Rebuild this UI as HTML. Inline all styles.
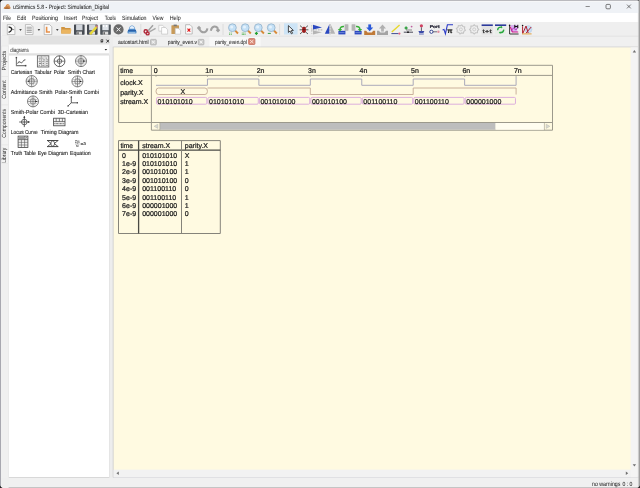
<!DOCTYPE html>
<html><head><meta charset="utf-8">
<style>
*{margin:0;padding:0}
html,body{width:640px;height:488px;overflow:hidden;background:#f0f0f0}
svg{display:block;font-family:"Liberation Sans",sans-serif;text-rendering:geometricPrecision;will-change:transform}
</style></head><body>
<svg width="640" height="488" viewBox="0 0 640 488">
<rect x="0" y="0" width="640" height="488" fill="#f0f0f0"/>
<rect x="0" y="0" width="640" height="13" fill="#eff2f6"/>
<rect x="0" y="13" width="640" height="9" fill="#ffffff"/>
<rect x="0" y="22" width="640" height="14" fill="#efefef"/>
<rect x="0" y="35.8" width="640" height="0.8" fill="#d9d9d9"/>
<path d="M3.6 8.8 Q3.8 7 5.4 6.6 Q6 4 7.8 3.9 Q9.6 4 9.9 6.6 Q10.8 7.2 10.4 8.8 Z" fill="#d0884a"/>
<path d="M4.2 8.8 Q5.6 7.4 7.4 7.6 Q9 7.8 10.2 8.8 Z" fill="#9a5a2a"/>
<path d="M7.2 5.6 Q8.6 5.2 9.4 6.2" fill="none" stroke="#f4c08a" stroke-width="0.7"/>
<rect x="1" y="1" width="638" height="0.7" fill="#fafafa"/>
<rect x="1" y="1" width="0.7" height="486" fill="#fafafa"/>
<text x="13" y="9" font-size="6.1" fill="#262626" stroke="#262626" stroke-width="0.05" textLength="96" lengthAdjust="spacingAndGlyphs">uSimmics 5.8 - Project: Simulation_Digital</text>
<line x1="585.6" y1="6.5" x2="589.8" y2="6.5" stroke="#444" stroke-width="0.6"/>
<rect x="606" y="4.4" width="4.4" height="4.4" fill="none" stroke="#444" stroke-width="0.7" rx="1"/>
<line x1="627" y1="4.6" x2="630.8" y2="8.4" stroke="#444" stroke-width="0.7"/>
<line x1="630.8" y1="4.6" x2="627" y2="8.4" stroke="#444" stroke-width="0.7"/>
<text x="3" y="19.8" font-size="6.2" fill="#262626" stroke="#262626" stroke-width="0.04" textLength="8.2" lengthAdjust="spacingAndGlyphs">File</text>
<text x="17" y="19.8" font-size="6.2" fill="#262626" stroke="#262626" stroke-width="0.04" textLength="9" lengthAdjust="spacingAndGlyphs">Edit</text>
<text x="32" y="19.8" font-size="6.2" fill="#262626" stroke="#262626" stroke-width="0.04" textLength="26" lengthAdjust="spacingAndGlyphs">Positioning</text>
<text x="64" y="19.8" font-size="6.2" fill="#262626" stroke="#262626" stroke-width="0.04" textLength="13" lengthAdjust="spacingAndGlyphs">Insert</text>
<text x="82" y="19.8" font-size="6.2" fill="#262626" stroke="#262626" stroke-width="0.04" textLength="16" lengthAdjust="spacingAndGlyphs">Project</text>
<text x="104.8" y="19.8" font-size="6.2" fill="#262626" stroke="#262626" stroke-width="0.04" textLength="11" lengthAdjust="spacingAndGlyphs">Tools</text>
<text x="122" y="19.8" font-size="6.2" fill="#262626" stroke="#262626" stroke-width="0.04" textLength="24.5" lengthAdjust="spacingAndGlyphs">Simulation</text>
<text x="152.5" y="19.8" font-size="6.2" fill="#262626" stroke="#262626" stroke-width="0.04" textLength="11" lengthAdjust="spacingAndGlyphs">View</text>
<text x="169.7" y="19.8" font-size="6.2" fill="#262626" stroke="#262626" stroke-width="0.04" textLength="11" lengthAdjust="spacingAndGlyphs">Help</text>
<rect x="0" y="477.5" width="640" height="10.5" fill="#f0f0f0"/>
<line x1="0" y1="477.3" x2="640" y2="477.3" stroke="#d2d2d8" stroke-width="0.9"/>
<rect x="0" y="487" width="640" height="1" fill="#c4c4c4"/>
<text x="592" y="485.8" font-size="6.2" fill="#262626" stroke="#262626" stroke-width="0.03" textLength="28.4" lengthAdjust="spacingAndGlyphs">no warnings</text>
<text x="622.4" y="485.8" font-size="6.2" fill="#262626" stroke="#262626" stroke-width="0.03" textLength="10" lengthAdjust="spacingAndGlyphs">0 : 0</text>
<path d="M7.3 24.6 L12.7 24.6 L14.899999999999999 26.8 L14.899999999999999 34.6 L7.3 34.6 Z" fill="#fbfbfb" stroke="#9a9a9a" stroke-width="0.6"/>
<path d="M8.6 26.8 Q12.4 27.6 11.6 29.6 Q11 31.6 8.6 32.4" fill="none" stroke="#222" stroke-width="1.3"/>
<line x1="11.6" y1="29.6" x2="14.2" y2="29.6" stroke="#444" stroke-width="0.6"/>
<path d="M19.2 29.2 L21.8 29.2 L20.5 30.7 Z" fill="#111"/>
<path d="M25.4 24.6 L30.8 24.6 L33.0 26.8 L33.0 34.6 L25.4 34.6 Z" fill="#fbfbfb" stroke="#9a9a9a" stroke-width="0.6"/>
<line x1="26.6" y1="27.2" x2="31.8" y2="27.2" stroke="#777" stroke-width="0.7"/>
<line x1="26.6" y1="28.9" x2="31.8" y2="28.9" stroke="#777" stroke-width="0.7"/>
<line x1="26.6" y1="30.6" x2="31.8" y2="30.6" stroke="#777" stroke-width="0.7"/>
<line x1="26.6" y1="32.3" x2="31.8" y2="32.3" stroke="#777" stroke-width="0.7"/>
<path d="M37.6 29.2 L40.2 29.2 L38.9 30.7 Z" fill="#111"/>
<path d="M44.2 24.6 L49.6 24.6 L51.800000000000004 26.8 L51.800000000000004 34.6 L44.2 34.6 Z" fill="#fbfbfb" stroke="#9a9a9a" stroke-width="0.6"/>
<path d="M46.6 26.8 L46.6 32 L50 32" fill="none" stroke="#e6904a" stroke-width="1.6"/>
<path d="M56 29.2 L58.6 29.2 L57.3 30.7 Z" fill="#111"/>
<path d="M61.2 27 L64.4 27 L65.4 28 L70.6 28 L70.6 33.4 L61.2 33.4 Z" fill="#d09440"/>
<path d="M61.8 29.6 L71.4 29.6 L70.6 33.4 L61.2 33.4 Z" fill="#ebb560"/>
<rect x="74" y="24.4" width="10.6" height="10.3" fill="#464b52" rx="0.6"/>
<rect x="76.1" y="24.4" width="6.4" height="5.8" fill="#d2d6dc"/>
<rect x="76.6" y="31.6" width="5.4" height="3.1" fill="#dcdcdc"/>
<rect x="77.3" y="32.2" width="1.4" height="2.2" fill="#555"/>
<rect x="87" y="24.4" width="10.6" height="10.3" fill="#464b52" rx="0.6"/>
<rect x="89.1" y="24.4" width="6.4" height="5.8" fill="#d2d6dc"/>
<rect x="89.6" y="31.6" width="5.4" height="3.1" fill="#dcdcdc"/>
<rect x="90.3" y="32.2" width="1.4" height="2.2" fill="#555"/>
<path d="M89.2 33.6 L95.6 26.2 L97.4 27.8 L91 35 Z" fill="#e8d838"/>
<path d="M95.6 26.2 L96.6 25 L98 26.4 L97.4 27.8 Z" fill="#d88080"/>
<rect x="100.2" y="24.4" width="10.6" height="10.3" fill="#4e545a" rx="0.6"/>
<rect x="102.3" y="24.4" width="6.4" height="5.8" fill="#dfe3e8"/>
<rect x="102.8" y="31.6" width="5.4" height="3.1" fill="#dcdcdc"/>
<rect x="103.5" y="32.2" width="1.4" height="2.2" fill="#555"/>
<rect x="103" y="25" width="1.2" height="2" fill="#fff"/>
<rect x="106" y="25" width="1.2" height="2" fill="#fff"/>
<circle cx="118.5" cy="29.4" r="5.1" fill="#6a6a6a"/>
<line x1="116.5" y1="27.4" x2="120.5" y2="31.4" stroke="#f4f4f4" stroke-width="1.0"/>
<line x1="120.5" y1="27.4" x2="116.5" y2="31.4" stroke="#f4f4f4" stroke-width="1.0"/>
<path d="M130 26.2 Q132 24.6 134 26.2 L136.4 31.4 Q137 33.6 135.4 33.6 L128.6 33.6 Q127 33.6 127.6 31.4 Z" fill="#4a88c8"/>
<path d="M130.4 26.6 Q132 25.4 133.6 26.6 L134.6 28.8 L129.4 28.8 Z" fill="#e8f2fc"/>
<path d="M128.2 30 L135.8 30 L136.2 31.2 L127.8 31.2 Z" fill="#2a60a8"/>
<rect x="128.6" y="32.4" width="6.8" height="0.9" fill="#c8dcf0"/>
<line x1="140.8" y1="24" x2="140.8" y2="35" stroke="#d8d8d8" stroke-width="0.8"/>
<line x1="148.2" y1="30.8" x2="153" y2="25.2" stroke="#a0a0a0" stroke-width="1.4"/>
<line x1="149.4" y1="31.8" x2="155.6" y2="28.4" stroke="#a8a8a8" stroke-width="1.4"/>
<circle cx="145.8" cy="31.4" r="1.7" fill="none" stroke="#b02838" stroke-width="1.4"/>
<circle cx="147.6" cy="33.4" r="1.5" fill="none" stroke="#b02838" stroke-width="1.4"/>
<path d="M158.8 25.3 L162.60000000000002 25.3 L164.8 27.5 L164.8 31.1 L158.8 31.1 Z" fill="#fdfdfd" stroke="#bbbbbb" stroke-width="0.6"/>
<path d="M161.6 27.5 L165.4 27.5 L167.6 29.7 L167.6 34.1 L161.6 34.1 Z" fill="#fdfdfd" stroke="#bbbbbb" stroke-width="0.6"/>
<rect x="171.4" y="25.2" width="7.6" height="8.8" fill="#c89a58" rx="0.6"/>
<rect x="173.6" y="24.6" width="3.2" height="1.6" fill="#777"/>
<path d="M175.2 28.2 L178.4 28.2 L180.6 30.4 L180.6 34.2 L175.2 34.2 Z" fill="#fdfdfd" stroke="#bbbbbb" stroke-width="0.6"/>
<path d="M185.6 24.7 L190.0 24.7 L192.2 26.9 L192.2 34.0 L185.6 34.0 Z" fill="#fbfbfb" stroke="#9a9a9a" stroke-width="0.6"/>
<line x1="187.5" y1="28.6" x2="190.3" y2="31.6" stroke="#e01818" stroke-width="1.1"/>
<line x1="190.3" y1="28.6" x2="187.5" y2="31.6" stroke="#e01818" stroke-width="1.1"/>
<path d="M199.4 29.2 Q201.6 33 204.6 32.2 Q207 31.4 207.4 28.4" fill="none" stroke="#a0a0a0" stroke-width="2.0"/>
<path d="M196.8 28 L199 25.8 L201.2 28 L199 30.2 Z" fill="#a0a0a0"/>
<path d="M210.8 30.8 Q211.6 27.2 214.4 26.6 Q216.6 26.4 218 28.6" fill="none" stroke="#a0a0a0" stroke-width="2.0"/>
<path d="M215.8 30.2 L218 28 L220.2 30.2 L218 32.4 Z" fill="#a0a0a0"/>
<line x1="223" y1="24" x2="223" y2="35" stroke="#d8d8d8" stroke-width="0.8"/>
<line x1="235.0" y1="30.3" x2="238.0" y2="33.5" stroke="#d88a38" stroke-width="1.9"/>
<circle cx="232.4" cy="27.7" r="3.9" fill="#c4e0f6" stroke="#8aaac4" stroke-width="0.7"/>
<circle cx="231.70000000000002" cy="26.9" r="1.5" fill="#e6f2fc"/>
<rect x="229.20000000000002" y="32.6" width="0.9" height="0.9" fill="#4ab04a"/>
<rect x="229.20000000000002" y="34" width="0.9" height="0.9" fill="#4ab04a"/>
<rect x="230.8" y="32.6" width="0.9" height="0.9" fill="#4ab04a"/>
<rect x="230.8" y="34" width="0.9" height="0.9" fill="#4ab04a"/>
<line x1="247.79999999999998" y1="30.3" x2="250.79999999999998" y2="33.5" stroke="#d88a38" stroke-width="1.9"/>
<circle cx="245.2" cy="27.7" r="3.9" fill="#c4e0f6" stroke="#8aaac4" stroke-width="0.7"/>
<circle cx="244.5" cy="26.9" r="1.5" fill="#e6f2fc"/>
<rect x="241.79999999999998" y="32.6" width="0.9" height="0.9" fill="#4ab04a"/>
<rect x="241.79999999999998" y="34" width="0.9" height="0.9" fill="#4ab04a"/>
<rect x="243.2" y="32.6" width="0.9" height="0.9" fill="#4ab04a"/>
<rect x="243.2" y="34" width="0.9" height="0.9" fill="#4ab04a"/>
<rect x="244.6" y="32.6" width="0.9" height="0.9" fill="#4ab04a"/>
<rect x="244.6" y="34" width="0.9" height="0.9" fill="#4ab04a"/>
<line x1="260.90000000000003" y1="30.3" x2="263.90000000000003" y2="33.5" stroke="#d88a38" stroke-width="1.9"/>
<circle cx="258.3" cy="27.7" r="3.9" fill="#c4e0f6" stroke="#8aaac4" stroke-width="0.7"/>
<circle cx="257.6" cy="26.9" r="1.5" fill="#e6f2fc"/>
<line x1="254.9" y1="33.4" x2="257.90000000000003" y2="33.4" stroke="#20a030" stroke-width="1.3"/>
<line x1="256.40000000000003" y1="31.9" x2="256.40000000000003" y2="34.9" stroke="#20a030" stroke-width="1.3"/>
<line x1="273.8" y1="30.3" x2="276.8" y2="33.5" stroke="#d88a38" stroke-width="1.9"/>
<circle cx="271.2" cy="27.7" r="3.9" fill="#c4e0f6" stroke="#8aaac4" stroke-width="0.7"/>
<circle cx="270.5" cy="26.9" r="1.5" fill="#e6f2fc"/>
<line x1="267.8" y1="33.4" x2="270.8" y2="33.4" stroke="#30a040" stroke-width="1.0"/>
<line x1="279.6" y1="24" x2="279.6" y2="35" stroke="#d8d8d8" stroke-width="0.8"/>
<rect x="284" y="23.3" width="13.6" height="11.2" fill="#cde4f6"/>
<path d="M288.4 25.6 L288.4 32.4 L290 31 L291.4 33.8 L292.6 33.2 L291.2 30.6 L293.4 30.4 Z" fill="#f4f6f8" stroke="#222" stroke-width="0.8"/>
<line x1="300" y1="25.6" x2="302.8" y2="28" stroke="#222" stroke-width="0.7"/>
<line x1="308" y1="25.6" x2="305.2" y2="28" stroke="#222" stroke-width="0.7"/>
<line x1="299.6" y1="29.8" x2="302.2" y2="29.8" stroke="#222" stroke-width="0.7"/>
<line x1="308.4" y1="29.8" x2="305.8" y2="29.8" stroke="#222" stroke-width="0.7"/>
<line x1="300" y1="34" x2="302.8" y2="31.6" stroke="#222" stroke-width="0.7"/>
<line x1="308" y1="34" x2="305.2" y2="31.6" stroke="#222" stroke-width="0.7"/>
<path d="M302.2 27.6 Q304 25.8 305.8 27.6 L306 31.8 Q304 34 302 31.8 Z" fill="#c02828"/>
<line x1="304" y1="26.8" x2="304" y2="33" stroke="#2a1010" stroke-width="0.6"/>
<line x1="302.2" y1="29.6" x2="305.8" y2="29.6" stroke="#2a1010" stroke-width="0.5"/>
<path d="M313 24.8 L322 27.4 L313 29.4 Z" fill="#2a48c0"/>
<path d="M313 30.4 L322 32.2 L313 34.6 Z" fill="#b4b4b4"/>
<line x1="311.6" y1="29.9" x2="323" y2="29.9" stroke="#555" stroke-width="0.6" stroke-dasharray="0.7 0.9"/>
<line x1="311.8" y1="25" x2="311.8" y2="34.6" stroke="#777" stroke-width="0.5" stroke-dasharray="0.7 0.9"/>
<path d="M329.3 24.6 L324.8 33.8 L329.3 33.8 Z" fill="#2a48c0"/>
<path d="M330.7 24.6 L335.2 33.8 L330.7 33.8 Z" fill="#b4b4b4"/>
<line x1="330" y1="24" x2="330" y2="35" stroke="#555" stroke-width="0.6" stroke-dasharray="0.7 0.9"/>
<rect x="344.6" y="24.2" width="3.8" height="6.6" fill="#b4b4b4" rx="0.5"/>
<rect x="338.4" y="30.8" width="7" height="3.6" fill="#2a48c0"/>
<line x1="339.2" y1="32.6" x2="344.6" y2="32.6" stroke="#aac0f0" stroke-width="0.5"/>
<path d="M344 26.6 Q340.2 26.2 340 29.6" fill="none" stroke="#38b038" stroke-width="1.5"/>
<path d="M337.8 29 L342.2 29 L340 31.4 Z" fill="#38b038"/>
<rect x="351.6" y="24.2" width="3.8" height="6.6" fill="#b4b4b4" rx="0.5"/>
<rect x="354.6" y="30.8" width="7" height="3.6" fill="#2a48c0"/>
<line x1="355.4" y1="32.6" x2="360.8" y2="32.6" stroke="#aac0f0" stroke-width="0.5"/>
<path d="M356 26.6 Q359.8 26.2 360 29.6" fill="none" stroke="#38b038" stroke-width="1.5"/>
<path d="M362.2 29 L357.8 29 L360 31.4 Z" fill="#38b038"/>
<path d="M364.2 30.8 L366.2 30.8 L367.6 32.4 L371.8 32.4 L373.2 30.8 L375.2 30.8 L375.2 35 L364.2 35 Z" fill="#c07a38"/>
<rect x="368.3" y="24.4" width="2.8" height="3.6" fill="#2a58d8"/>
<path d="M366.2 27.6 L373.2 27.6 L369.7 31.2 Z" fill="#2a58d8"/>
<path d="M377 30.8 L379 30.8 L380.4 32.4 L384.6 32.4 L386 30.8 L388 30.8 L388 35 L377 35 Z" fill="#a4a4a4"/>
<rect x="381.1" y="28" width="2.8" height="3.6" fill="#b4b4b4"/>
<path d="M379 28.4 L386 28.4 L382.5 24.6 Z" fill="#b0b0b0"/>
<line x1="391.4" y1="33.6" x2="398.6" y2="33.6" stroke="#2a3a88" stroke-width="0.9"/>
<circle cx="399.4" cy="33.6" r="1.1" fill="#e06080"/>
<line x1="391.8" y1="32" x2="399.6" y2="25" stroke="#e8d82a" stroke-width="1.4"/>
<line x1="403.8" y1="32.2" x2="413" y2="32.2" stroke="#223" stroke-width="0.8"/>
<circle cx="408" cy="32.2" r="0.9" fill="#111"/>
<path d="M404.6 28 L407.6 28 M406.1 26.4 L406.1 29.6" fill="none" stroke="#30a040" stroke-width="1.5"/>
<circle cx="411.6" cy="26.6" r="0.9" fill="#c060a0"/>
<line x1="406" y1="30" x2="412" y2="30" stroke="#222" stroke-width="0.5"/>
<circle cx="421.4" cy="25.8" r="1.6" fill="#d04060"/>
<line x1="421.4" y1="27.4" x2="421.4" y2="31" stroke="#334" stroke-width="0.8"/>
<path d="M418.4 31 L424.4 31 L423.4 33 L419.4 33 Z" fill="#3a4aa8"/>
<line x1="419" y1="34" x2="423.8" y2="34" stroke="#3a4aa8" stroke-width="0.8"/>
<text x="429.8" y="28" font-size="4.2" fill="#223" stroke="#223" stroke-width="0.22" textLength="9.8" lengthAdjust="spacingAndGlyphs" font-weight="bold">Port</text>
<circle cx="431.4" cy="31.8" r="1.6" fill="#fff" stroke="#223388" stroke-width="0.9"/>
<line x1="433" y1="31.8" x2="437" y2="31.8" stroke="#334" stroke-width="0.7"/>
<circle cx="438.4" cy="31.8" r="1.2" fill="#e090a0"/>
<path d="M442.6 30 L444 29.4 L445.4 33.8 L447.4 24.8 L453 24.8" fill="none" stroke="#2a3ac8" stroke-width="1.1"/>
<text x="447.2" y="32.8" font-size="6.6" fill="#111" stroke="#111" stroke-width="0.22" textLength="5.2" lengthAdjust="spacingAndGlyphs" font-weight="bold">π</text>
<path d="M465.41 30.31 L463.89 31.41 L463.44 33.23 L461.59 32.93 L459.99 33.91 L458.89 32.39 L457.07 31.94 L457.37 30.09 L456.39 28.49 L457.91 27.39 L458.36 25.57 L460.21 25.87 L461.81 24.89 L462.91 26.41 L464.73 26.86 L464.43 28.71 Z" fill="none" stroke="#c4c4c4" stroke-width="1.1"/>
<circle cx="460.9" cy="29.4" r="1.5" fill="none" stroke="#cacaca" stroke-width="0.9"/>
<path d="M478.80 29.40 L477.53 30.78 L477.45 32.65 L475.58 32.73 L474.20 34.00 L472.82 32.73 L470.95 32.65 L470.87 30.78 L469.60 29.40 L470.87 28.02 L470.95 26.15 L472.82 26.07 L474.20 24.80 L475.58 26.07 L477.45 26.15 L477.53 28.02 Z" fill="none" stroke="#c4c4c4" stroke-width="1.1"/>
<circle cx="474.2" cy="29.4" r="1.5" fill="none" stroke="#cacaca" stroke-width="0.9"/>
<rect x="481.6" y="25.6" width="11.2" height="9" fill="#e2e2e2"/>
<rect x="481.6" y="24.4" width="11.2" height="1.6" fill="#2c3a9c"/>
<text x="482.6" y="32.8" font-size="5.2" fill="#333" stroke="#333" stroke-width="0.25" textLength="9.2" lengthAdjust="spacingAndGlyphs">t+t</text>
<rect x="495" y="25.6" width="11.2" height="9" fill="#e8eee8"/>
<rect x="495" y="24.4" width="11.2" height="1.6" fill="#2c3a9c"/>
<path d="M497.6 30.2 Q497.8 27 501.4 27.2" fill="none" stroke="#28a83c" stroke-width="1.3"/>
<path d="M503.8 29.6 Q503.6 32.8 500 32.6" fill="none" stroke="#28a83c" stroke-width="1.3"/>
<path d="M501 25.8 L502.6 27.2 L501 28.6 Z" fill="#28a83c"/>
<path d="M500.4 31.2 L498.8 32.6 L500.4 34 Z" fill="#28a83c"/>
<rect x="511" y="25" width="6.2" height="7" fill="#d8b0f0"/>
<path d="M509.6 25.2 L509.6 34 L518.6 34" fill="none" stroke="#222" stroke-width="0.9"/>
<path d="M510.2 26.8 L512.4 32 L518.2 32" fill="none" stroke="#d0208a" stroke-width="1.2"/>
<path d="M511 31 L513.4 28 L516 30 L518 27" fill="none" stroke="#b030c0" stroke-width="0.9"/>
<path d="M514.8 24.8 L514.8 28.2 M517.8 24.8 L517.8 28.2 M514.8 26.5 L517.8 26.5" fill="none" stroke="#111" stroke-width="1.0"/>
<circle cx="509.6" cy="25.4" r="0.8" fill="#111"/>
<circle cx="528.4" cy="29.2" r="3.6" fill="#c8def4" stroke="#b8c8e0" stroke-width="0.5"/>
<circle cx="522.6" cy="25.6" r="0.8" fill="#111"/>
<path d="M522.6 26.4 L522.6 33.6 M523 33 L526 26 L528.2 33 M526 33.2 L531.2 27" fill="none" stroke="#b02030" stroke-width="1.0"/>
<rect x="522" y="33.4" width="9.6" height="1.0" fill="#e0a040"/>
<rect x="0" y="36.3" width="110.6" height="8.3" fill="#e1e1e1"/>
<path d="M100.6 42.6 L100.6 40.2 Q100.6 39.2 101.6 39.2 L103.2 39.2 L103.2 41.6 Q103.2 42.6 102.2 42.6 Z" fill="#444"/>
<rect x="101.4" y="40" width="1" height="0.8" fill="#ddd"/>
<line x1="106.4" y1="39.6" x2="109.2" y2="42.6" stroke="#222" stroke-width="0.9"/>
<line x1="109.2" y1="39.6" x2="106.4" y2="42.6" stroke="#222" stroke-width="0.9"/>
<rect x="8.6" y="44.6" width="100.6" height="9.2" fill="#fdfdfd"/>
<line x1="8.6" y1="53.9" x2="109.2" y2="53.9" stroke="#d6d6d6" stroke-width="0.8"/>
<text x="10.2" y="51.8" font-size="6" fill="#2a2a2a" textLength="18.7" lengthAdjust="spacingAndGlyphs">diagrams</text>
<path d="M104.6 49 L107.2 49 L105.9 50.4 Z" fill="#222"/>
<rect x="8.6" y="55" width="100.8" height="422.4" fill="#ffffff" stroke="#d4d4d4" stroke-width="0.8"/>
<rect x="1" y="36" width="7.6" height="452" fill="#efefef"/>
<rect x="1.2" y="44.6" width="7.2" height="433" fill="#f0f0f0"/>
<rect x="1.6" y="46" width="6.8" height="30.5" fill="#f3f3f3" stroke="#e2e2e2" stroke-width="0.4"/>
<rect x="1.6" y="76.5" width="6.8" height="28.5" fill="#f3f3f3" stroke="#e2e2e2" stroke-width="0.4"/>
<rect x="1.6" y="105" width="6.8" height="40" fill="#f3f3f3" stroke="#e2e2e2" stroke-width="0.4"/>
<rect x="1.6" y="145" width="6.8" height="18.5" fill="#f3f3f3" stroke="#e2e2e2" stroke-width="0.4"/>
<text x="0" y="0" font-size="6" fill="#2a2a2a" text-anchor="middle" textLength="19.6" lengthAdjust="spacingAndGlyphs" transform="translate(5.2,60.6) rotate(-90)" dominant-baseline="central">Projects</text>
<text x="0" y="0" font-size="6" fill="#2a2a2a" text-anchor="middle" textLength="18.4" lengthAdjust="spacingAndGlyphs" transform="translate(5.2,89.5) rotate(-90)" dominant-baseline="central">Content</text>
<text x="0" y="0" font-size="6" fill="#2a2a2a" text-anchor="middle" textLength="28.7" lengthAdjust="spacingAndGlyphs" transform="translate(5.2,123.4) rotate(-90)" dominant-baseline="central">Components</text>
<text x="0" y="0" font-size="6" fill="#2a2a2a" text-anchor="middle" textLength="15" lengthAdjust="spacingAndGlyphs" transform="translate(5.2,155.3) rotate(-90)" dominant-baseline="central">Library</text>
<path d="M16.4 57.6 L16.4 65.6 L25.6 65.6" fill="none" stroke="#7a7a7a" stroke-width="1.1"/>
<rect x="15.7" y="56.9" width="1.4" height="1.4" fill="#444"/>
<rect x="24.9" y="64.9" width="1.5" height="1.5" fill="#444"/>
<path d="M17.6 63.6 Q18.8 60.4 20.2 62.2 Q21.6 64 22.8 61.6 Q23.8 59.6 25.4 59.8" fill="none" stroke="#555" stroke-width="1.0"/>
<rect x="37.4" y="55.8" width="11.4" height="11.2" fill="#f6f6f6" stroke="#666" stroke-width="0.9"/>
<rect x="38.6" y="57.6" width="2.2" height="1.0" fill="#8a8a8a"/>
<rect x="42.2" y="57.6" width="1.4" height="1.0" fill="#8a8a8a"/>
<rect x="45.8" y="57.6" width="1.4" height="1.0" fill="#8a8a8a"/>
<rect x="39.0" y="59.4" width="1.4" height="1.0" fill="#8a8a8a"/>
<rect x="42.6" y="59.4" width="2.2" height="1.0" fill="#8a8a8a"/>
<rect x="46.199999999999996" y="59.4" width="2.2" height="1.0" fill="#8a8a8a"/>
<rect x="38.6" y="61.2" width="2.2" height="1.0" fill="#8a8a8a"/>
<rect x="42.2" y="61.2" width="2.2" height="1.0" fill="#8a8a8a"/>
<rect x="45.8" y="61.2" width="2.2" height="1.0" fill="#8a8a8a"/>
<rect x="39.0" y="63.0" width="2.2" height="1.0" fill="#8a8a8a"/>
<rect x="42.6" y="63.0" width="1.4" height="1.0" fill="#8a8a8a"/>
<rect x="46.199999999999996" y="63.0" width="1.4" height="1.0" fill="#8a8a8a"/>
<rect x="38.6" y="64.8" width="1.4" height="1.0" fill="#8a8a8a"/>
<rect x="42.2" y="64.8" width="2.2" height="1.0" fill="#8a8a8a"/>
<rect x="45.8" y="64.8" width="2.2" height="1.0" fill="#8a8a8a"/>
<line x1="41.4" y1="56.2" x2="41.4" y2="66.6" stroke="#777" stroke-width="0.6"/>
<line x1="45" y1="56.2" x2="45" y2="66.6" stroke="#999" stroke-width="0.5"/>
<circle cx="59.5" cy="61.2" r="5.4" fill="none" stroke="#3a3a3a" stroke-width="0.8"/>
<circle cx="59.5" cy="61.2" r="2.2680000000000002" fill="none" stroke="#3a3a3a" stroke-width="0.7"/>
<line x1="54.1" y1="61.2" x2="64.9" y2="61.2" stroke="#3a3a3a" stroke-width="0.6"/>
<line x1="59.5" y1="55.800000000000004" x2="59.5" y2="66.60000000000001" stroke="#3a3a3a" stroke-width="0.6"/>
<circle cx="81" cy="61.1" r="5.5" fill="none" stroke="#4a4a4a" stroke-width="0.7"/>
<circle cx="81" cy="61.1" r="2.8" fill="none" stroke="#666" stroke-width="0.55"/>
<line x1="75.5" y1="61.1" x2="86.5" y2="61.1" stroke="#555" stroke-width="0.6"/>
<line x1="81" y1="55.6" x2="81" y2="66.6" stroke="#555" stroke-width="0.7"/>
<line x1="79.1" y1="56.7" x2="79.1" y2="65.5" stroke="#888" stroke-width="0.45"/>
<line x1="76.6" y1="59.2" x2="85.4" y2="59.2" stroke="#888" stroke-width="0.45"/>
<line x1="82.9" y1="56.7" x2="82.9" y2="65.5" stroke="#888" stroke-width="0.45"/>
<line x1="76.6" y1="63.0" x2="85.4" y2="63.0" stroke="#888" stroke-width="0.45"/>
<path d="M83.4 60.2 L85.2 61.1 L83.4 62.0 Z" fill="#111"/>
<circle cx="31.7" cy="81.2" r="5.6" fill="none" stroke="#4a4a4a" stroke-width="0.7"/>
<circle cx="31.7" cy="81.2" r="2.8" fill="none" stroke="#666" stroke-width="0.55"/>
<line x1="26.1" y1="81.2" x2="37.3" y2="81.2" stroke="#555" stroke-width="0.6"/>
<line x1="31.7" y1="75.60000000000001" x2="31.7" y2="86.8" stroke="#555" stroke-width="0.7"/>
<line x1="29.8" y1="76.72" x2="29.8" y2="85.68" stroke="#888" stroke-width="0.45"/>
<line x1="27.22" y1="79.3" x2="36.18" y2="79.3" stroke="#888" stroke-width="0.45"/>
<line x1="33.6" y1="76.72" x2="33.6" y2="85.68" stroke="#888" stroke-width="0.45"/>
<line x1="27.22" y1="83.10000000000001" x2="36.18" y2="83.10000000000001" stroke="#888" stroke-width="0.45"/>
<path d="M29.3 80.3 L27.5 81.2 L29.3 82.10000000000001 Z" fill="#111"/>
<circle cx="77.4" cy="81.4" r="5.5" fill="none" stroke="#4a4a4a" stroke-width="0.7"/>
<circle cx="77.4" cy="81.4" r="2.8" fill="none" stroke="#666" stroke-width="0.55"/>
<line x1="71.9" y1="81.4" x2="82.9" y2="81.4" stroke="#555" stroke-width="0.6"/>
<line x1="77.4" y1="75.9" x2="77.4" y2="86.9" stroke="#555" stroke-width="0.7"/>
<line x1="75.5" y1="77.0" x2="75.5" y2="85.80000000000001" stroke="#888" stroke-width="0.45"/>
<line x1="73.0" y1="79.5" x2="81.80000000000001" y2="79.5" stroke="#888" stroke-width="0.45"/>
<line x1="79.30000000000001" y1="77.0" x2="79.30000000000001" y2="85.80000000000001" stroke="#888" stroke-width="0.45"/>
<line x1="73.0" y1="83.30000000000001" x2="81.80000000000001" y2="83.30000000000001" stroke="#888" stroke-width="0.45"/>
<path d="M79.80000000000001 80.5 L81.60000000000001 81.4 L79.80000000000001 82.30000000000001 Z" fill="#111"/>
<circle cx="33" cy="101.4" r="5.5" fill="none" stroke="#4a4a4a" stroke-width="0.7"/>
<circle cx="33" cy="101.4" r="2.8" fill="none" stroke="#666" stroke-width="0.55"/>
<line x1="27.5" y1="101.4" x2="38.5" y2="101.4" stroke="#555" stroke-width="0.6"/>
<line x1="33" y1="95.9" x2="33" y2="106.9" stroke="#555" stroke-width="0.7"/>
<line x1="31.1" y1="97.0" x2="31.1" y2="105.80000000000001" stroke="#888" stroke-width="0.45"/>
<line x1="28.6" y1="99.5" x2="37.4" y2="99.5" stroke="#888" stroke-width="0.45"/>
<line x1="34.9" y1="97.0" x2="34.9" y2="105.80000000000001" stroke="#888" stroke-width="0.45"/>
<line x1="28.6" y1="103.30000000000001" x2="37.4" y2="103.30000000000001" stroke="#888" stroke-width="0.45"/>
<path d="M35.4 100.5 L37.2 101.4 L35.4 102.30000000000001 Z" fill="#111"/>
<path d="M71.3 96.6 L71.3 102.8 L77.4 102.8 M71.3 102.8 L68 106" fill="none" stroke="#3a3a3a" stroke-width="0.8"/>
<path d="M70.4 97.6 L71.3 96 L72.2 97.6 Z" fill="#333"/>
<rect x="76.8" y="102.2" width="1.2" height="1.2" fill="#333"/>
<rect x="67.4" y="105.4" width="1.2" height="1.2" fill="#333"/>
<line x1="24.3" y1="116.6" x2="24.3" y2="127.1" stroke="#3a3a3a" stroke-width="0.8"/>
<line x1="19.2" y1="122" x2="29.2" y2="122" stroke="#3a3a3a" stroke-width="0.8"/>
<circle cx="24.3" cy="122" r="2.8" fill="none" stroke="#3a3a3a" stroke-width="0.75"/>
<path d="M24.3 115.8 L23.3 117.8 L25.3 117.8 Z" fill="#222"/>
<path d="M30 122 L28.2 121 L28.2 123 Z" fill="#222"/>
<rect x="53.6" y="118.2" width="11.4" height="7.6" fill="#f4f4f4" stroke="#444" stroke-width="0.8"/>
<line x1="53.6" y1="121.6" x2="65" y2="121.6" stroke="#444" stroke-width="0.7"/>
<line x1="56.2" y1="118.2" x2="56.2" y2="121.6" stroke="#555" stroke-width="0.7"/>
<line x1="59.4" y1="118.2" x2="59.4" y2="121.6" stroke="#555" stroke-width="0.7"/>
<line x1="62.4" y1="118.2" x2="62.4" y2="121.6" stroke="#555" stroke-width="0.7"/>
<line x1="54.4" y1="123.7" x2="64.4" y2="123.7" stroke="#555" stroke-width="1.0" stroke-dasharray="0.9 0.5"/>
<rect x="18.1" y="136.1" width="9.8" height="11.4" fill="#f0f0f0" stroke="#444" stroke-width="0.8"/>
<line x1="18.1" y1="139.6" x2="27.9" y2="139.6" stroke="#444" stroke-width="0.7"/>
<line x1="18.1" y1="142.4" x2="27.9" y2="142.4" stroke="#666" stroke-width="0.6"/>
<line x1="18.1" y1="145" x2="27.9" y2="145" stroke="#666" stroke-width="0.6"/>
<line x1="21.4" y1="139.6" x2="21.4" y2="147.5" stroke="#555" stroke-width="0.6"/>
<line x1="24.6" y1="136.1" x2="24.6" y2="147.5" stroke="#555" stroke-width="0.6"/>
<rect x="18.8" y="136.8" width="5.2" height="2.2" fill="#9a9a9a"/>
<path d="M25.2 138.8 L27.2 136.8 M25.2 136.8 L27.2 138.8" fill="none" stroke="#555" stroke-width="0.5"/>
<line x1="47" y1="140.5" x2="58.4" y2="140.5" stroke="#333" stroke-width="0.9"/>
<line x1="47" y1="146.6" x2="58.4" y2="146.6" stroke="#333" stroke-width="0.9"/>
<path d="M47.4 140.6 L51.2 143.55 L47.4 146.5 M58 140.6 L54.2 143.55 L58 146.5" fill="none" stroke="#3a3a3a" stroke-width="0.8"/>
<ellipse cx="52.7" cy="143.55" rx="1.9" ry="2.6" fill="none" stroke="#3a3a3a" stroke-width="0.7"/>
<text x="75" y="143.4" font-size="3.4" fill="#333" stroke="#333" stroke-width="0.1" textLength="4.8" lengthAdjust="spacingAndGlyphs">Σ|1</text>
<line x1="75" y1="144" x2="79.6" y2="144" stroke="#444" stroke-width="0.4"/>
<text x="76.2" y="146.8" font-size="2.8" fill="#333" stroke="#333" stroke-width="0.1" textLength="2.2" lengthAdjust="spacingAndGlyphs">N</text>
<text x="80.4" y="145.4" font-size="3.8" fill="#333" stroke="#333" stroke-width="0.1" textLength="5.6" lengthAdjust="spacingAndGlyphs">=3</text>
<text x="10.7" y="74.1" font-size="5.8" fill="#262626" stroke="#262626" stroke-width="0.12" textLength="21.5" lengthAdjust="spacingAndGlyphs">Cartesian</text>
<text x="34.6" y="74.1" font-size="5.8" fill="#262626" stroke="#262626" stroke-width="0.12" textLength="16.8" lengthAdjust="spacingAndGlyphs">Tabular</text>
<text x="53.7" y="74.1" font-size="5.8" fill="#262626" stroke="#262626" stroke-width="0.12" textLength="11.3" lengthAdjust="spacingAndGlyphs">Polar</text>
<text x="67.8" y="74.1" font-size="5.8" fill="#262626" stroke="#262626" stroke-width="0.12" textLength="27.2" lengthAdjust="spacingAndGlyphs">Smith Chart</text>
<text x="10.8" y="94.1" font-size="5.8" fill="#262626" stroke="#262626" stroke-width="0.12" textLength="41.7" lengthAdjust="spacingAndGlyphs">Admittance Smith</text>
<text x="54.9" y="94.1" font-size="5.8" fill="#262626" stroke="#262626" stroke-width="0.12" textLength="44" lengthAdjust="spacingAndGlyphs">Polar-Smith Combi</text>
<text x="10.8" y="114.1" font-size="5.8" fill="#262626" stroke="#262626" stroke-width="0.12" textLength="44.1" lengthAdjust="spacingAndGlyphs">Smith-Polar Combi</text>
<text x="57.7" y="114.1" font-size="5.8" fill="#262626" stroke="#262626" stroke-width="0.12" textLength="30.3" lengthAdjust="spacingAndGlyphs">3D-Cartesian</text>
<text x="10.8" y="134.4" font-size="5.8" fill="#262626" stroke="#262626" stroke-width="0.12" textLength="26.9" lengthAdjust="spacingAndGlyphs">Locus Curve</text>
<text x="40.8" y="134.4" font-size="5.8" fill="#262626" stroke="#262626" stroke-width="0.12" textLength="37.8" lengthAdjust="spacingAndGlyphs">Timing Diagram</text>
<text x="10.8" y="154.7" font-size="5.8" fill="#262626" stroke="#262626" stroke-width="0.12" textLength="25" lengthAdjust="spacingAndGlyphs">Truth Table</text>
<text x="37.7" y="154.7" font-size="5.8" fill="#262626" stroke="#262626" stroke-width="0.12" textLength="30.3" lengthAdjust="spacingAndGlyphs">Eye Diagram</text>
<text x="70" y="154.7" font-size="5.8" fill="#262626" stroke="#262626" stroke-width="0.12" textLength="20.8" lengthAdjust="spacingAndGlyphs">Equation</text>
<rect x="109.4" y="36" width="3.8" height="442" fill="#ededed"/>
<rect x="113" y="36.6" width="525" height="10.6" fill="#f0f0f0"/>
<rect x="209.4" y="36.8" width="51.2" height="10.4" fill="#f8f8f8"/>
<text x="118" y="44.1" font-size="5.8" fill="#333" stroke="#333" stroke-width="0.1" textLength="30.5" lengthAdjust="spacingAndGlyphs">autostart.html</text>
<text x="167.7" y="44.1" font-size="5.8" fill="#333" stroke="#333" stroke-width="0.1" textLength="29.3" lengthAdjust="spacingAndGlyphs">parity_even.v</text>
<text x="215" y="44.1" font-size="5.8" fill="#333" stroke="#333" stroke-width="0.1" textLength="31.8" lengthAdjust="spacingAndGlyphs">parity_even.dpl</text>
<rect x="150.5" y="39.4" width="5.8" height="5.5" fill="#cdcdcd" stroke="#b0b0b0" stroke-width="0.8" rx="0.8"/>
<line x1="152.0" y1="40.9" x2="154.8" y2="43.4" stroke="#fafafa" stroke-width="0.9"/>
<line x1="154.8" y1="40.9" x2="152.0" y2="43.4" stroke="#fafafa" stroke-width="0.9"/>
<rect x="198.3" y="39.4" width="5.6" height="5.5" fill="#cdcdcd" stroke="#b0b0b0" stroke-width="0.8" rx="0.8"/>
<line x1="199.8" y1="40.9" x2="202.4" y2="43.4" stroke="#fafafa" stroke-width="0.9"/>
<line x1="202.4" y1="40.9" x2="199.8" y2="43.4" stroke="#fafafa" stroke-width="0.9"/>
<rect x="248.6" y="38.6" width="6.3" height="5.9" fill="#d98a78" stroke="#c87060" stroke-width="0.8" rx="0.8"/>
<line x1="250.1" y1="40.1" x2="253.4" y2="43.0" stroke="#fde8e0" stroke-width="0.9"/>
<line x1="253.4" y1="40.1" x2="250.1" y2="43.0" stroke="#fde8e0" stroke-width="0.9"/>
<rect x="113.2" y="47.2" width="517.6" height="422.6" fill="#fffae1"/>
<line x1="113.2" y1="46.9" x2="638" y2="46.9" stroke="#d4d4d4" stroke-width="0.8"/>
<line x1="113.2" y1="46.9" x2="113.2" y2="477.3" stroke="#cccccc" stroke-width="0.8"/>
<rect x="630.8" y="47.3" width="7" height="430" fill="#f4f4f4"/>
<rect x="113.6" y="469.8" width="517.2" height="7.4" fill="#f2f2f2"/>
<path d="M632.7 52.4 L636.1 52.4 L634.4 50 Z" fill="#707070"/>
<path d="M632.7 464.2 L636.1 464.2 L634.4 466.6 Z" fill="#707070"/>
<path d="M118.8 471.6 L118.8 475 L116.4 473.3 Z" fill="#707070"/>
<path d="M625.8 471.6 L625.8 475 L628.2 473.3 Z" fill="#707070"/>
<rect x="0" y="0" width="1" height="488" fill="#a8a8b0"/>
<rect x="0" y="0" width="640" height="0.9" fill="#b4b4b8"/>
<path d="M0 0 L2.6 0 Q0.9 0.9 0 2.6 Z" fill="#111"/>
<path d="M640 0 L637.4 0 Q639.1 0.9 640 2.6 Z" fill="#222"/>
<rect x="637.8" y="13" width="0.8" height="475" fill="#e4e4e4"/>
<rect x="638.6" y="0" width="1.4" height="488" fill="#a0a0a0"/>
<path d="M640 488 L637.4 488 Q639.1 487.1 640 485.4 Z" fill="#222"/>
<path d="M0 488 L2.6 488 Q0.9 487.1 0 485.4 Z" fill="#222"/>
<line x1="118.6" y1="65.3" x2="552.5" y2="65.3" stroke="#9c998c" stroke-width="1"/>
<line x1="118.6" y1="65.3" x2="118.6" y2="122.5" stroke="#9c998c" stroke-width="1"/>
<line x1="552.5" y1="65.3" x2="552.5" y2="130.2" stroke="#9c998c" stroke-width="1"/>
<line x1="151.4" y1="65.3" x2="151.4" y2="130.2" stroke="#9c998c" stroke-width="1"/>
<line x1="118.6" y1="75.4" x2="552.5" y2="75.4" stroke="#9c998c" stroke-width="1"/>
<line x1="118.6" y1="122.5" x2="552.5" y2="122.5" stroke="#9c998c" stroke-width="1"/>
<line x1="151.4" y1="130.2" x2="552.5" y2="130.2" stroke="#9c998c" stroke-width="1"/>
<rect x="160" y="123" width="335.6" height="6.7" fill="#bdbdbd"/>
<rect x="495.6" y="123" width="48.6" height="6.7" fill="#fffdf0"/>
<line x1="159.8" y1="122.5" x2="159.8" y2="130.2" stroke="#9c998c" stroke-width="0.6"/>
<line x1="544.4" y1="122.5" x2="544.4" y2="130.2" stroke="#9c998c" stroke-width="0.6"/>
<path d="M154.2 126.3 L157.8 124.2 L157.8 128.4 Z" fill="#d8d8d0" stroke="#b8b8b0" stroke-width="0.5"/>
<path d="M549.8 126.3 L546.2 124.2 L546.2 128.4 Z" fill="#d8d8d0" stroke="#b8b8b0" stroke-width="0.5"/>
<text x="120.2" y="72.8" font-size="7" fill="#1e1e1e" stroke="#1e1e1e" stroke-width="0.24" textLength="12.8" lengthAdjust="spacingAndGlyphs">time</text>
<text x="153.8" y="72.8" font-size="7" fill="#1e1e1e" stroke="#1e1e1e" stroke-width="0.24">0</text>
<line x1="156.0" y1="75.4" x2="156.0" y2="77" stroke="#9c998c" stroke-width="0.7"/>
<text x="205.24" y="72.8" font-size="7" fill="#1e1e1e" stroke="#1e1e1e" stroke-width="0.24">1n</text>
<line x1="207.44" y1="75.4" x2="207.44" y2="77" stroke="#9c998c" stroke-width="0.7"/>
<text x="256.68" y="72.8" font-size="7" fill="#1e1e1e" stroke="#1e1e1e" stroke-width="0.24">2n</text>
<line x1="258.88" y1="75.4" x2="258.88" y2="77" stroke="#9c998c" stroke-width="0.7"/>
<text x="308.12" y="72.8" font-size="7" fill="#1e1e1e" stroke="#1e1e1e" stroke-width="0.24">3n</text>
<line x1="310.32" y1="75.4" x2="310.32" y2="77" stroke="#9c998c" stroke-width="0.7"/>
<text x="359.56" y="72.8" font-size="7" fill="#1e1e1e" stroke="#1e1e1e" stroke-width="0.24">4n</text>
<line x1="361.76" y1="75.4" x2="361.76" y2="77" stroke="#9c998c" stroke-width="0.7"/>
<text x="411.0" y="72.8" font-size="7" fill="#1e1e1e" stroke="#1e1e1e" stroke-width="0.24">5n</text>
<line x1="413.2" y1="75.4" x2="413.2" y2="77" stroke="#9c998c" stroke-width="0.7"/>
<text x="462.44" y="72.8" font-size="7" fill="#1e1e1e" stroke="#1e1e1e" stroke-width="0.24">6n</text>
<line x1="464.64" y1="75.4" x2="464.64" y2="77" stroke="#9c998c" stroke-width="0.7"/>
<text x="513.8799999999999" y="72.8" font-size="7" fill="#1e1e1e" stroke="#1e1e1e" stroke-width="0.24">7n</text>
<line x1="516.0799999999999" y1="75.4" x2="516.0799999999999" y2="77" stroke="#9c998c" stroke-width="0.7"/>
<text x="120.2" y="85.3" font-size="7" fill="#1e1e1e" stroke="#1e1e1e" stroke-width="0.24">clock.X</text>
<text x="120.2" y="94.5" font-size="7" fill="#1e1e1e" stroke="#1e1e1e" stroke-width="0.24">parity.X</text>
<text x="120.2" y="103.7" font-size="7" fill="#1e1e1e" stroke="#1e1e1e" stroke-width="0.24">stream.X</text>
<path d="M156.0 85.3 L207.44 85.3 L207.44 79 L258.88 79 L258.88 85.3 L310.32 85.3 L310.32 79 L361.76 79 L361.76 85.3 L413.2 85.3 L413.2 79 L464.64 79 L464.64 85.3 L516.0799999999999 85.3 L516.0799999999999 77" fill="none" stroke="#a2a0b6" stroke-width="0.9"/>
<path d="M158.5 88 L204.94 88 Q207.44 88 207.44 91.25 Q207.44 94.5 204.94 94.5 L158.5 94.5 Q156.0 94.5 156.0 91.25 Q156.0 88 158.5 88 Z" fill="none" stroke="#c4a894" stroke-width="0.9"/>
<text x="182.92" y="94.4" font-size="7" fill="#1e1e1e" stroke="#1e1e1e" stroke-width="0.24" text-anchor="middle">X</text>
<path d="M207.44 88 L310.32 88 L310.32 94.5 L413.2 94.5 L413.2 88 L516.0799999999999 88 L516.0799999999999 94.5" fill="none" stroke="#c4a894" stroke-width="0.9"/>
<rect x="156.6" y="97.4" width="50.24000000000001" height="6.8" fill="none" stroke="#d8a6dc" stroke-width="0.9" rx="1.1"/>
<text x="157.6" y="103.7" font-size="7" fill="#1e1e1e" stroke="#1e1e1e" stroke-width="0.24">010101010</text>
<rect x="208.04" y="97.4" width="50.23999999999998" height="6.8" fill="none" stroke="#d8a6dc" stroke-width="0.9" rx="1.1"/>
<text x="209.04" y="103.7" font-size="7" fill="#1e1e1e" stroke="#1e1e1e" stroke-width="0.24">010101010</text>
<rect x="259.48" y="97.4" width="50.23999999999995" height="6.8" fill="none" stroke="#d8a6dc" stroke-width="0.9" rx="1.1"/>
<text x="260.48" y="103.7" font-size="7" fill="#1e1e1e" stroke="#1e1e1e" stroke-width="0.24">001010100</text>
<rect x="310.92" y="97.4" width="50.23999999999995" height="6.8" fill="none" stroke="#d8a6dc" stroke-width="0.9" rx="1.1"/>
<text x="311.92" y="103.7" font-size="7" fill="#1e1e1e" stroke="#1e1e1e" stroke-width="0.24">001010100</text>
<rect x="362.36" y="97.4" width="50.23999999999995" height="6.8" fill="none" stroke="#d8a6dc" stroke-width="0.9" rx="1.1"/>
<text x="363.36" y="103.7" font-size="7" fill="#1e1e1e" stroke="#1e1e1e" stroke-width="0.24">001100110</text>
<rect x="413.8" y="97.4" width="50.23999999999995" height="6.8" fill="none" stroke="#d8a6dc" stroke-width="0.9" rx="1.1"/>
<text x="414.8" y="103.7" font-size="7" fill="#1e1e1e" stroke="#1e1e1e" stroke-width="0.24">001100110</text>
<rect x="465.24" y="97.4" width="50.239999999999895" height="6.8" fill="none" stroke="#d8a6dc" stroke-width="0.9" rx="1.1"/>
<text x="466.24" y="103.7" font-size="7" fill="#1e1e1e" stroke="#1e1e1e" stroke-width="0.24">000001000</text>
<line x1="118.5" y1="140.6" x2="220.3" y2="140.6" stroke="#85837a" stroke-width="1"/>
<line x1="118.5" y1="140.6" x2="118.5" y2="233.5" stroke="#85837a" stroke-width="1"/>
<line x1="220.3" y1="140.6" x2="220.3" y2="233.5" stroke="#85837a" stroke-width="1"/>
<line x1="118.5" y1="233.5" x2="220.3" y2="233.5" stroke="#85837a" stroke-width="1"/>
<line x1="118.5" y1="150.1" x2="220.3" y2="150.1" stroke="#4a4a44" stroke-width="1.3"/>
<line x1="138.6" y1="140.6" x2="138.6" y2="233.5" stroke="#4a4a44" stroke-width="1.3"/>
<line x1="181.5" y1="140.6" x2="181.5" y2="233.5" stroke="#85837a" stroke-width="1"/>
<text x="120.4" y="147.6" font-size="7" fill="#1e1e1e" stroke="#1e1e1e" stroke-width="0.24" textLength="12.6" lengthAdjust="spacingAndGlyphs">time</text>
<text x="142.2" y="147.6" font-size="7" fill="#1e1e1e" stroke="#1e1e1e" stroke-width="0.24">stream.X</text>
<text x="184.8" y="147.6" font-size="7" fill="#1e1e1e" stroke="#1e1e1e" stroke-width="0.24">parity.X</text>
<text x="122.1" y="157.6" font-size="7" fill="#1e1e1e" stroke="#1e1e1e" stroke-width="0.24">0</text>
<text x="142.2" y="157.6" font-size="7" fill="#1e1e1e" stroke="#1e1e1e" stroke-width="0.24">010101010</text>
<text x="184.8" y="157.6" font-size="7" fill="#1e1e1e" stroke="#1e1e1e" stroke-width="0.24">X</text>
<text x="122.1" y="165.98" font-size="7" fill="#1e1e1e" stroke="#1e1e1e" stroke-width="0.24">1e-9</text>
<text x="142.2" y="165.98" font-size="7" fill="#1e1e1e" stroke="#1e1e1e" stroke-width="0.24">010101010</text>
<text x="184.8" y="165.98" font-size="7" fill="#1e1e1e" stroke="#1e1e1e" stroke-width="0.24">1</text>
<text x="122.1" y="174.35999999999999" font-size="7" fill="#1e1e1e" stroke="#1e1e1e" stroke-width="0.24">2e-9</text>
<text x="142.2" y="174.35999999999999" font-size="7" fill="#1e1e1e" stroke="#1e1e1e" stroke-width="0.24">001010100</text>
<text x="184.8" y="174.35999999999999" font-size="7" fill="#1e1e1e" stroke="#1e1e1e" stroke-width="0.24">1</text>
<text x="122.1" y="182.74" font-size="7" fill="#1e1e1e" stroke="#1e1e1e" stroke-width="0.24">3e-9</text>
<text x="142.2" y="182.74" font-size="7" fill="#1e1e1e" stroke="#1e1e1e" stroke-width="0.24">001010100</text>
<text x="184.8" y="182.74" font-size="7" fill="#1e1e1e" stroke="#1e1e1e" stroke-width="0.24">0</text>
<text x="122.1" y="191.12" font-size="7" fill="#1e1e1e" stroke="#1e1e1e" stroke-width="0.24">4e-9</text>
<text x="142.2" y="191.12" font-size="7" fill="#1e1e1e" stroke="#1e1e1e" stroke-width="0.24">001100110</text>
<text x="184.8" y="191.12" font-size="7" fill="#1e1e1e" stroke="#1e1e1e" stroke-width="0.24">0</text>
<text x="122.1" y="199.5" font-size="7" fill="#1e1e1e" stroke="#1e1e1e" stroke-width="0.24">5e-9</text>
<text x="142.2" y="199.5" font-size="7" fill="#1e1e1e" stroke="#1e1e1e" stroke-width="0.24">001100110</text>
<text x="184.8" y="199.5" font-size="7" fill="#1e1e1e" stroke="#1e1e1e" stroke-width="0.24">1</text>
<text x="122.1" y="207.88" font-size="7" fill="#1e1e1e" stroke="#1e1e1e" stroke-width="0.24">6e-9</text>
<text x="142.2" y="207.88" font-size="7" fill="#1e1e1e" stroke="#1e1e1e" stroke-width="0.24">000001000</text>
<text x="184.8" y="207.88" font-size="7" fill="#1e1e1e" stroke="#1e1e1e" stroke-width="0.24">1</text>
<text x="122.1" y="216.26" font-size="7" fill="#1e1e1e" stroke="#1e1e1e" stroke-width="0.24">7e-9</text>
<text x="142.2" y="216.26" font-size="7" fill="#1e1e1e" stroke="#1e1e1e" stroke-width="0.24">000001000</text>
<text x="184.8" y="216.26" font-size="7" fill="#1e1e1e" stroke="#1e1e1e" stroke-width="0.24">0</text>
</svg>
</body></html>
